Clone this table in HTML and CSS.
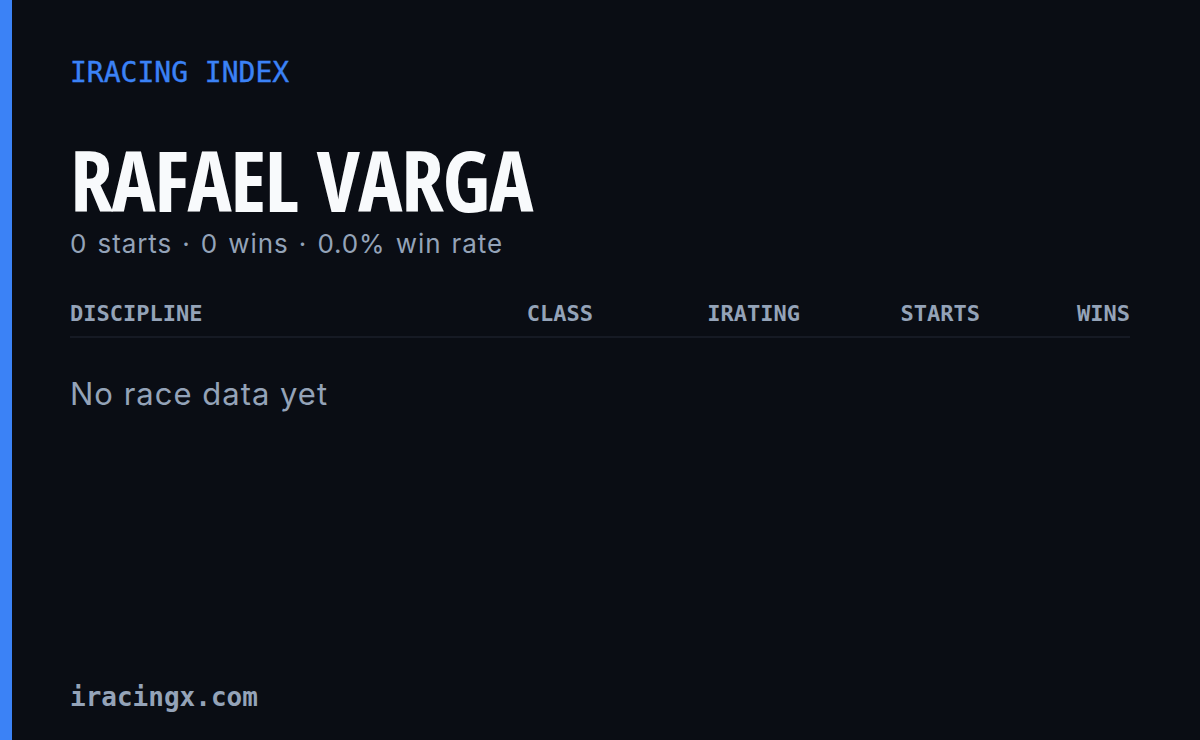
FILE: index.html
```html
<!DOCTYPE html>
<html>
<head>
<meta charset="utf-8">
<link rel="stylesheet" href="styles.css">
</head>
<body>
<div class="card">
  <div class="accent"></div>
  <main class="content">
    <div class="brand">IRACING INDEX</div>
    <h1 class="name">RAFAEL VARGA</h1>
    <p class="summary">0 starts · 0 wins · 0.0% win rate</p>
    <div class="table">
      <div class="thead">
        <span class="col-left">DISCIPLINE</span>
        <span>CLASS</span>
        <span>IRATING</span>
        <span>STARTS</span>
        <span>WINS</span>
      </div>
      <p class="empty">No race data yet</p>
    </div>
    <div class="footer">iracingx.com</div>
  </main>
</div>
</body>
</html>
```
FILE: styles.css
```css
html, body {
  margin: 0;
  padding: 0;
  background: #0a0d14;
}
.card {
  display: flex;
  width: 1200px;
  height: 740px;
  background: #0a0d14;
}
.accent {
  width: 12px;
  flex: none;
  background: #3b82f6;
}
.content {
  flex: 1;
  display: flex;
  flex-direction: column;
  padding: 59px 70px 28px 58px;
}
.brand {
  font-family: "DejaVu Sans Mono", monospace;
  font-size: 28px;
  line-height: 28px;
  color: #3b82f6;
  -webkit-text-stroke: 0.4px #3b82f6;
}
.name {
  margin: 51px 0 0 0;
  font-family: "Open Sans", "Liberation Sans", sans-serif;
  font-stretch: 75%;
  font-weight: 700;
  font-size: 84px;
  line-height: 84px;
  letter-spacing: -1.5px;
  word-spacing: 6px;
  color: #f8fafc;
}
.summary {
  margin: 5px 0 0 0;
  font-family: "Inter", sans-serif;
  font-size: 26px;
  line-height: 34px;
  letter-spacing: 0.9px;
  word-spacing: 2px;
  color: #94a3b8;
}
.table {
  margin-top: 38px;
}
.thead {
  display: grid;
  grid-template-columns: 1fr 140px 207px 180px 150px;
  text-align: right;
  font-family: "DejaVu Sans Mono", monospace;
  font-weight: 700;
  font-size: 22px;
  line-height: 28px;
  color: #94a3b8;
  padding-top: 1px;
  padding-bottom: 8px;
  border-bottom: 2px solid #161a24;
}
.col-left {
  text-align: left;
}
.empty {
  margin: 36px 0 0 0;
  font-family: "Inter", sans-serif;
  font-size: 31px;
  line-height: 40px;
  letter-spacing: 1px;
  color: #94a3b8;
}
.footer {
  margin-top: auto;
  font-family: "DejaVu Sans Mono", monospace;
  font-weight: 700;
  font-size: 26px;
  line-height: 30px;
  color: #94a3b8;
}
```
